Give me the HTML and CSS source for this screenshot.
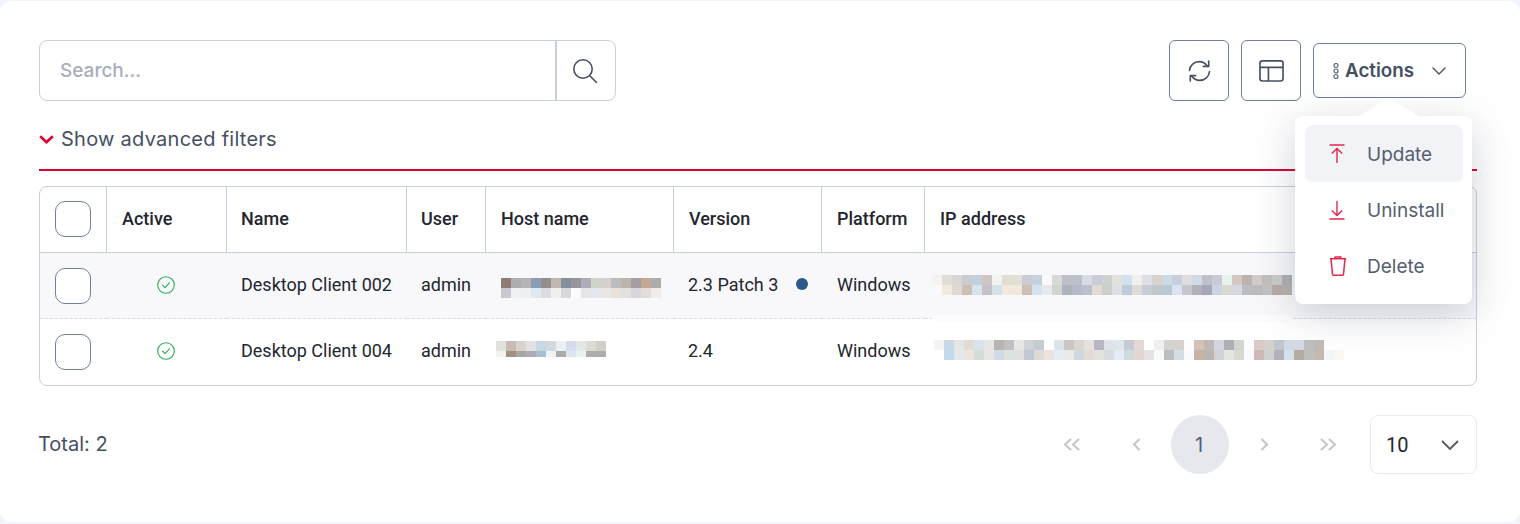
FILE: index.html
```html
<!DOCTYPE html>
<html lang="en">
<head>
<meta charset="utf-8">
<title>Clients</title>
<link rel="stylesheet" href="styles.css">
</head>
<body>
<main class="card">
  <div class="toolbar">
    <div class="search">
      <div class="search-input">Search...</div>
      <button class="search-btn" aria-label="Search">
        <svg class="ico-search" viewBox="0 0 26 26" fill="none" stroke="#454f63" stroke-width="1.6" stroke-linecap="round"><circle cx="11" cy="11" r="9.200"/><path d="M17.800 17.800l6.700 6.700"/></svg>
      </button>
    </div>
    <div class="tools">
      <button class="tool" aria-label="Refresh">
        <svg class="ico-tool" viewBox="0 0 24 24" fill="none" stroke="#454f63" stroke-width="1.6" stroke-linecap="round" stroke-linejoin="round"><path d="M2 11.500C2.400 6.400 6.600 2.600 11.800 2.600c3.400 0 6 1.500 8 4.400"/><path d="M21.200 2v5.400h-5.400"/><path d="M22 12.500c-.4 5.100-4.600 8.900-9.800 8.900-3.400 0-6-1.500-8-4.400"/><path d="M2.800 22v-5.400h5.400"/></svg>
      </button>
      <button class="tool" aria-label="Layout">
        <svg class="ico-tool" viewBox="0 0 26 24" fill="none" stroke="#454f63" stroke-width="1.7" stroke-linejoin="round"><rect x="1" y="1.400" width="24" height="21" rx="2.600"/><path d="M1 8.200h24M9.800 8.200v14.200"/></svg>
      </button>
      <div class="actions-wrap">
        <button class="actions">
          <svg class="ico-dots" viewBox="0 0 6 16" fill="none" stroke="#5a6478" stroke-width="1.200"><circle cx="3" cy="2.500" r="2"/><circle cx="3" cy="8" r="2"/><circle cx="3" cy="13.500" r="2"/></svg>
          <span class="actions-label">Actions</span>
          <svg class="ico-caret" viewBox="0 0 14 8" fill="none" stroke="#454f63" stroke-width="1.400" stroke-linecap="round" stroke-linejoin="round"><path d="M1 1l6 6 6-6"/></svg>
        </button>
        <div class="menu">
          <div class="menu-arrow"></div>
          <div class="menu-item hover">
            <svg class="ico-menu" viewBox="0 0 16 20" fill="none" stroke="#e0294f" stroke-width="1.400"><path d="M.5 1h15M8 4.500V19M2.800 9.600L8 4.500l5.200 5.100"/></svg>
            <span>Update</span>
          </div>
          <div class="menu-item">
            <svg class="ico-menu" viewBox="0 0 16 20" fill="none" stroke="#e0294f" stroke-width="1.400"><path d="M.5 19h15M8 1v14.500M2.800 10.400L8 15.500l5.200-5.100"/></svg>
            <span>Uninstall</span>
          </div>
          <div class="menu-item">
            <svg class="ico-menu ico-trash" viewBox="0 0 18 20" fill="none" stroke="#e0294f" stroke-width="1.500" stroke-linejoin="round"><path d="M.8 2.800h16.400M6 2.700V1h6v1.700M2 2.800l1.500 15.300c.1.800.5 1.200 1.300 1.200h8.400c.8 0 1.200-.4 1.300-1.200L16 2.800"/></svg>
            <span>Delete</span>
          </div>
        </div>
      </div>
    </div>
  </div>

  <div class="filters">
    <svg class="ico-chev" viewBox="0 0 15 9" fill="none" stroke="#dc0032" stroke-width="2.600"><path d="M1.200 1.200L7.500 7.200l6.300-6"/></svg>
    <span>Show advanced filters</span>
  </div>

  <div class="table-box">
    <table class="grid">
      <colgroup>
        <col class="c-check"><col class="c-active"><col class="c-name"><col class="c-user"><col class="c-host"><col class="c-version"><col class="c-platform"><col class="c-ip">
      </colgroup>
      <thead>
        <tr>
          <th class="check"><span class="box"></span></th>
          <th class="nudge">Active</th><th>Name</th><th>User</th><th class="nudge">Host name</th><th class="nudge">Version</th><th class="nudge">Platform</th><th class="nudge">IP address</th>
        </tr>
      </thead>
      <tbody>
        <tr class="striped">
          <td class="check"><span class="box"></span></td>
          <td class="status"><svg class="ico-ok" viewBox="0 0 18 18" fill="none" stroke="#27ae4f" stroke-width="1.100" stroke-linecap="round" stroke-linejoin="round"><circle cx="9" cy="9" r="8.300"/><path d="M5.600 9.200l2.400 2.400 4.500-4.700"/></svg></td>
          <td>Desktop Client 002</td>
          <td>admin</td>
          <td class="blur-cell">
            <svg class="pix pix-host1" viewBox="0 0 16 2" shape-rendering="crispEdges">
              <rect x="0" y="0" width="1" height="1" fill="#8e7b76"/><rect x="1" y="0" width="1" height="1" fill="#aeaeae"/><rect x="2" y="0" width="1" height="1" fill="#b6b4b4"/><rect x="3" y="0" width="1" height="1" fill="#8b9cb6"/><rect x="4" y="0" width="1" height="1" fill="#938e8c"/><rect x="5" y="0" width="1" height="1" fill="#c2b9ae"/><rect x="6" y="0" width="1" height="1" fill="#85909c"/><rect x="7" y="0" width="1" height="1" fill="#95969a"/><rect x="8" y="0" width="1" height="1" fill="#aeacb6"/><rect x="9" y="0" width="1" height="1" fill="#d0d3ca"/><rect x="10" y="0" width="1" height="1" fill="#d3d0ce"/><rect x="11" y="0" width="1" height="1" fill="#bdbcbe"/><rect x="12" y="0" width="1" height="1" fill="#bdb4aa"/><rect x="13" y="0" width="1" height="1" fill="#a69da2"/><rect x="14" y="0" width="1" height="1" fill="#c2a994"/><rect x="15" y="0" width="1" height="1" fill="#adacaa"/>
              <rect x="0" y="1" width="1" height="1" fill="#cbc8d0"/><rect x="1" y="1" width="1" height="1" fill="#f0f1f4"/><rect x="2" y="1" width="1" height="1" fill="#eeeff1"/><rect x="3" y="1" width="1" height="1" fill="#e0e8f2"/><rect x="4" y="1" width="1" height="1" fill="#dbdce2"/><rect x="5" y="1" width="1" height="1" fill="#f0f0f0"/><rect x="6" y="1" width="1" height="1" fill="#d6d8dc"/><rect x="7" y="1" width="1" height="1" fill="#fbfbfb"/><rect x="8" y="1" width="1" height="1" fill="#e6e5e6"/><rect x="9" y="1" width="1" height="1" fill="#e4e7ef"/><rect x="10" y="1" width="1" height="1" fill="#ebe8e4"/><rect x="11" y="1" width="1" height="1" fill="#e9e2da"/><rect x="12" y="1" width="1" height="1" fill="#e2e1df"/><rect x="13" y="1" width="1" height="1" fill="#d8d6d8"/><rect x="14" y="1" width="1" height="1" fill="#e2dcda"/><rect x="15" y="1" width="1" height="1" fill="#f0ecea"/>
            </svg>
          </td>
          <td class="version-cell">
            <div class="version"><span>2.3 Patch 3</span><span class="dot"></span></div>
          </td>
          <td class="nudge">Windows</td>
          <td class="blur-cell">
            <svg class="pix pix-ip1" viewBox="0 0 36 4.700" shape-rendering="crispEdges">
              <rect x="0" y="0" width="1" height="1" fill="#f6f2ef"/><rect x="1" y="0" width="1" height="1" fill="#e2dcd6"/><rect x="2" y="0" width="1" height="1" fill="#dad6d4"/><rect x="3" y="0" width="1" height="1" fill="#cbcbd4"/><rect x="4" y="0" width="1" height="1" fill="#c3d0de"/><rect x="5" y="0" width="1" height="1" fill="#cdc6c4"/><rect x="6" y="0" width="1" height="1" fill="#f2f4f2"/><rect x="7" y="0" width="1" height="1" fill="#e2ded4"/><rect x="8" y="0" width="1" height="1" fill="#e2dfd6"/><rect x="9" y="0" width="1" height="1" fill="#cbcbd6"/><rect x="10" y="0" width="1" height="1" fill="#c4d2e0"/><rect x="11" y="0" width="1" height="1" fill="#fafafa"/><rect x="12" y="0" width="1" height="1" fill="#d8d8d6"/><rect x="13" y="0" width="1" height="1" fill="#bfbfca"/><rect x="14" y="0" width="1" height="1" fill="#bcc2cc"/><rect x="15" y="0" width="1" height="1" fill="#d6dbe5"/><rect x="16" y="0" width="1" height="1" fill="#c9cdd8"/><rect x="17" y="0" width="1" height="1" fill="#ced2cc"/><rect x="18" y="0" width="1" height="1" fill="#e2e1dc"/><rect x="19" y="0" width="1" height="1" fill="#d0e2f2"/><rect x="20" y="0" width="1" height="1" fill="#f3efec"/><rect x="21" y="0" width="1" height="1" fill="#dedee4"/><rect x="22" y="0" width="1" height="1" fill="#d6d3ce"/><rect x="23" y="0" width="1" height="1" fill="#ccdae6"/><rect x="24" y="0" width="1" height="1" fill="#c8cfdc"/><rect x="25" y="0" width="1" height="1" fill="#e0dedc"/><rect x="26" y="0" width="1" height="1" fill="#cedae4"/><rect x="27" y="0" width="1" height="1" fill="#bcc1cc"/><rect x="28" y="0" width="1" height="1" fill="#c8cbd5"/><rect x="29" y="0" width="1" height="1" fill="#e8f2ec"/><rect x="30" y="0" width="1" height="1" fill="#d6c6c0"/><rect x="31" y="0" width="1" height="1" fill="#bdb2ae"/><rect x="32" y="0" width="1" height="1" fill="#d0cbc8"/><rect x="33" y="0" width="1" height="1" fill="#c2bfbc"/><rect x="34" y="0" width="1" height="1" fill="#cdcbcb"/><rect x="35" y="0" width="1" height="1" fill="#aeb0b4"/>
              <rect x="0" y="1" width="1" height="1" fill="#f9f9fb"/><rect x="1" y="1" width="1" height="1" fill="#f2eae0"/><rect x="2" y="1" width="1" height="1" fill="#e0d8d2"/><rect x="3" y="1" width="1" height="1" fill="#cdbfb4"/><rect x="4" y="1" width="1" height="1" fill="#d6e4f0"/><rect x="5" y="1" width="1" height="1" fill="#c4c4c8"/><rect x="6" y="1" width="1" height="1" fill="#d6e2ea"/><rect x="7" y="1" width="1" height="1" fill="#f2e9de"/><rect x="8" y="1" width="1" height="1" fill="#f2e8da"/><rect x="9" y="1" width="1" height="1" fill="#ccc0b6"/><rect x="10" y="1" width="1" height="1" fill="#d6e2f0"/><rect x="11" y="1" width="1" height="1" fill="#e6eaf0"/><rect x="12" y="1" width="1" height="1" fill="#d2d4d2"/><rect x="13" y="1" width="1" height="1" fill="#aeb4be"/><rect x="14" y="1" width="1" height="1" fill="#b6bac6"/><rect x="15" y="1" width="1" height="1" fill="#bcbfcc"/><rect x="16" y="1" width="1" height="1" fill="#e2dbd2"/><rect x="17" y="1" width="1" height="1" fill="#cccec8"/><rect x="18" y="1" width="1" height="1" fill="#dedfe2"/><rect x="19" y="1" width="1" height="1" fill="#bfcbd8"/><rect x="20" y="1" width="1" height="1" fill="#dddcd8"/><rect x="21" y="1" width="1" height="1" fill="#c8ccd4"/><rect x="22" y="1" width="1" height="1" fill="#c0c8cc"/><rect x="23" y="1" width="1" height="1" fill="#bac8d2"/><rect x="24" y="1" width="1" height="1" fill="#dce3f0"/><rect x="25" y="1" width="1" height="1" fill="#c5c6d0"/><rect x="26" y="1" width="1" height="1" fill="#b2b0b8"/><rect x="27" y="1" width="1" height="1" fill="#a6a8ba"/><rect x="28" y="1" width="1" height="1" fill="#ccd2e0"/><rect x="29" y="1" width="1" height="1" fill="#dad9d0"/><rect x="30" y="1" width="1" height="1" fill="#d8d8e2"/><rect x="31" y="1" width="1" height="1" fill="#bcbdc2"/><rect x="32" y="1" width="1" height="1" fill="#bcbcbc"/><rect x="33" y="1" width="1" height="1" fill="#c2c1c6"/><rect x="34" y="1" width="1" height="1" fill="#b8aca6"/><rect x="35" y="1" width="1" height="1" fill="#bcb2ac"/>
              <rect x="0" y="2" width="36" height="2" fill="#f8f8fa"/>
              <rect x="0" y="4" width="36" height="0.700" fill="#fcfcfd"/>
            </svg>
          </td>
        </tr>
        <tr>
          <td class="check"><span class="box"></span></td>
          <td class="status"><svg class="ico-ok" viewBox="0 0 18 18" fill="none" stroke="#27ae4f" stroke-width="1.100" stroke-linecap="round" stroke-linejoin="round"><circle cx="9" cy="9" r="8.300"/><path d="M5.600 9.200l2.400 2.400 4.500-4.700"/></svg></td>
          <td>Desktop Client 004</td>
          <td>admin</td>
          <td class="blur-cell">
            <svg class="pix pix-host2" viewBox="0 0 11 1.600" shape-rendering="crispEdges">
              <rect x="0" y="0" width="1" height="1" fill="#e2e2dc"/><rect x="1" y="0" width="1" height="1" fill="#c6bcb4"/><rect x="2" y="0" width="1" height="1" fill="#dbd2cc"/><rect x="3" y="0" width="1" height="1" fill="#e1e1e6"/><rect x="4" y="0" width="1" height="1" fill="#c6d8e4"/><rect x="5" y="0" width="1" height="1" fill="#d2d9e0"/><rect x="6" y="0" width="1" height="1" fill="#eaf0f4"/><rect x="7" y="0" width="1" height="1" fill="#d6dcec"/><rect x="8" y="0" width="1" height="1" fill="#e2e8e4"/><rect x="9" y="0" width="1" height="1" fill="#dcdcd4"/><rect x="10" y="0" width="1" height="1" fill="#d2cecc"/>
              <rect x="0" y="1" width="1" height="1" fill="#f4f2ea"/><rect x="1" y="1" width="1" height="1" fill="#a18f84"/><rect x="2" y="1" width="1" height="1" fill="#a8a6a4"/><rect x="3" y="1" width="1" height="1" fill="#aeacb2"/><rect x="4" y="1" width="1" height="1" fill="#a5c0d0"/><rect x="5" y="1" width="1" height="1" fill="#f2f2f2"/><rect x="6" y="1" width="1" height="1" fill="#acacac"/><rect x="7" y="1" width="1" height="1" fill="#e0e6ee"/><rect x="8" y="1" width="1" height="1" fill="#eaf2ee"/><rect x="9" y="1" width="1" height="1" fill="#adadab"/><rect x="10" y="1" width="1" height="1" fill="#adadab"/>
            </svg>
          </td>
          <td>2.4</td>
          <td class="nudge">Windows</td>
          <td class="blur-cell">
            <svg class="pix pix-ip2" viewBox="0 0 41 2" shape-rendering="crispEdges">
              <rect x="0" y="0" width="1" height="1" fill="#f5f3f1"/><rect x="1" y="0" width="1" height="1" fill="#c8d9e8"/><rect x="2" y="0" width="1" height="1" fill="#e4e6e6"/><rect x="3" y="0" width="1" height="1" fill="#e4dad4"/><rect x="4" y="0" width="1" height="1" fill="#d6e4e8"/><rect x="5" y="0" width="1" height="1" fill="#e6e6e4"/><rect x="6" y="0" width="1" height="1" fill="#b8b4b0"/><rect x="7" y="0" width="1" height="1" fill="#c0c0c4"/><rect x="8" y="0" width="1" height="1" fill="#e6e6e2"/><rect x="9" y="0" width="1" height="1" fill="#ccd4d8"/><rect x="10" y="0" width="1" height="1" fill="#c6ccd4"/><rect x="11" y="0" width="1" height="1" fill="#fff"/><rect x="12" y="0" width="1" height="1" fill="#dce6e8"/><rect x="13" y="0" width="1" height="1" fill="#ccc6c4"/><rect x="14" y="0" width="1" height="1" fill="#dad6d0"/><rect x="15" y="0" width="1" height="1" fill="#e6e2de"/><rect x="16" y="0" width="1" height="1" fill="#b8b6c2"/><rect x="17" y="0" width="1" height="1" fill="#e0e4ea"/><rect x="18" y="0" width="1" height="1" fill="#dee6ee"/><rect x="19" y="0" width="1" height="1" fill="#c6cad2"/><rect x="20" y="0" width="1" height="1" fill="#e2d8d4"/><rect x="21" y="0" width="1" height="1" fill="#fff"/><rect x="22" y="0" width="1" height="1" fill="#eef0f0"/><rect x="23" y="0" width="1" height="1" fill="#d4d4ce"/><rect x="24" y="0" width="1" height="1" fill="#d8d2cc"/><rect x="25" y="0" width="1" height="1" fill="#fdfcfa"/><rect x="26" y="0" width="1" height="1" fill="#d2c2bc"/><rect x="27" y="0" width="1" height="1" fill="#bfb8b4"/><rect x="28" y="0" width="1" height="1" fill="#d2d6de"/><rect x="29" y="0" width="1" height="1" fill="#aeaeb6"/><rect x="30" y="0" width="1" height="1" fill="#d2d6d0"/><rect x="31" y="0" width="1" height="1" fill="#fdfcfa"/><rect x="32" y="0" width="1" height="1" fill="#d8cac4"/><rect x="33" y="0" width="1" height="1" fill="#d6d0ca"/><rect x="34" y="0" width="1" height="1" fill="#c0c6cc"/><rect x="35" y="0" width="1" height="1" fill="#d2dae4"/><rect x="36" y="0" width="1" height="1" fill="#d6dae4"/><rect x="37" y="0" width="1" height="1" fill="#c0c0c2"/><rect x="38" y="0" width="1" height="1" fill="#c2bcb8"/><rect x="39" y="0" width="1" height="1" fill="#fff"/><rect x="40" y="0" width="1" height="1" fill="#fff"/>
              <rect x="0" y="1" width="1" height="1" fill="#fff"/><rect x="1" y="1" width="1" height="1" fill="#c4d8ee"/><rect x="2" y="1" width="1" height="1" fill="#e2e8ea"/><rect x="3" y="1" width="1" height="1" fill="#eae4de"/><rect x="4" y="1" width="1" height="1" fill="#d8dcd8"/><rect x="5" y="1" width="1" height="1" fill="#e6e6e4"/><rect x="6" y="1" width="1" height="1" fill="#d2dae8"/><rect x="7" y="1" width="1" height="1" fill="#dce2e0"/><rect x="8" y="1" width="1" height="1" fill="#e0e0de"/><rect x="9" y="1" width="1" height="1" fill="#c2c8d2"/><rect x="10" y="1" width="1" height="1" fill="#e0dad6"/><rect x="11" y="1" width="1" height="1" fill="#ece2e0"/><rect x="12" y="1" width="1" height="1" fill="#e4ecf6"/><rect x="13" y="1" width="1" height="1" fill="#eceae6"/><rect x="14" y="1" width="1" height="1" fill="#d2d6de"/><rect x="15" y="1" width="1" height="1" fill="#e2dcd6"/><rect x="16" y="1" width="1" height="1" fill="#e4e2dc"/><rect x="17" y="1" width="1" height="1" fill="#d8dce0"/><rect x="18" y="1" width="1" height="1" fill="#e4ecf6"/><rect x="19" y="1" width="1" height="1" fill="#d0dada"/><rect x="20" y="1" width="1" height="1" fill="#e2d6d2"/><rect x="21" y="1" width="1" height="1" fill="#e4e2e6"/><rect x="22" y="1" width="1" height="1" fill="#f8faf8"/><rect x="23" y="1" width="1" height="1" fill="#bcbec0"/><rect x="24" y="1" width="1" height="1" fill="#d4dce4"/><rect x="25" y="1" width="1" height="1" fill="#f8fafc"/><rect x="26" y="1" width="1" height="1" fill="#c8b2a6"/><rect x="27" y="1" width="1" height="1" fill="#bab4b2"/><rect x="28" y="1" width="1" height="1" fill="#d0d2d6"/><rect x="29" y="1" width="1" height="1" fill="#e4e6e0"/><rect x="30" y="1" width="1" height="1" fill="#d8dad2"/><rect x="31" y="1" width="1" height="1" fill="#f8fafc"/><rect x="32" y="1" width="1" height="1" fill="#ceb9b6"/><rect x="33" y="1" width="1" height="1" fill="#ced0d2"/><rect x="34" y="1" width="1" height="1" fill="#b6b0bc"/><rect x="35" y="1" width="1" height="1" fill="#d4e2ee"/><rect x="36" y="1" width="1" height="1" fill="#b4aca0"/><rect x="37" y="1" width="1" height="1" fill="#bebebc"/><rect x="38" y="1" width="1" height="1" fill="#c4bab2"/><rect x="39" y="1" width="1" height="1" fill="#f4f6f4"/><rect x="40" y="1" width="1" height="1" fill="#faf8f2"/>
            </svg>
          </td>
        </tr>
      </tbody>
    </table>
  </div>

  <div class="footer">
    <span class="total">Total: 2</span>
    <div class="pager">
      <nav class="pages">
        <span class="page"><svg class="ico-page wide" viewBox="0 0 18 13" fill="none" stroke="#c3c5c9" stroke-width="2"><path d="M8 1L2 6.500l6 5.500M16 1l-6 5.500 6 5.500"/></svg></span>
        <span class="page"><svg class="ico-page" viewBox="0 0 9 13" fill="none" stroke="#c3c5c9" stroke-width="2"><path d="M7.500 1L2 6.500l5.500 5.500"/></svg></span>
        <span class="page current">1</span>
        <span class="page"><svg class="ico-page" viewBox="0 0 9 13" fill="none" stroke="#c3c5c9" stroke-width="2"><path d="M1.500 1L7 6.500 1.500 12"/></svg></span>
        <span class="page"><svg class="ico-page wide" viewBox="0 0 18 13" fill="none" stroke="#c3c5c9" stroke-width="2"><path d="M2 1l6 5.500L2 12M10 1l6 5.500-6 5.500"/></svg></span>
      </nav>
      <div class="size">
        <span>10</span>
        <svg class="ico-size" viewBox="0 0 18 10" fill="none" stroke="#55585e" stroke-width="1.800"><path d="M1 1l8 8 8-8"/></svg>
      </div>
    </div>
  </div>
</main>
</body>
</html>
```
FILE: styles.css
```css
* { box-sizing: border-box; }

html, body { margin: 0; height: 100%; }

body {
  background: #f1f5fb;
  padding: 1px 0 2px;
  font-family: "Inter", "Liberation Sans", sans-serif;
  color: #454f63;
  overflow: hidden;
}

button { font: inherit; color: inherit; background: none; padding: 0; cursor: pointer; }

.card {
  height: 521px;
  background: #fff;
  border-radius: 12px;
  padding: 39px 43px 0 39px;
}

/* toolbar */
.toolbar {
  display: flex;
  justify-content: space-between;
  align-items: flex-start;
  padding-right: 11px;
}

.search {
  width: 577px;
  height: 61px;
  display: flex;
  border: 1px solid #c8cfdf;
  border-radius: 8px;
}

.search-input {
  flex: 1;
  padding-left: 20px;
  display: flex;
  align-items: center;
  font-size: 19px;
  font-weight: 500;
  color: #a6aebf;
}

.search-btn {
  width: 60px;
  border: 0;
  border-left: 2px solid #c8cfdf;
  display: flex;
  align-items: center;
  justify-content: center;
  padding-right: 2px;
}

.ico-search { width: 26px; height: 26px; }

.tools { display: flex; gap: 12px; align-items: flex-start; }

.tool {
  width: 60px;
  height: 61px;
  border: 1px solid #6e7f9f;
  border-radius: 6px;
  display: flex;
  align-items: center;
  justify-content: center;
}

.ico-tool { width: 25px; height: 24px; }

.actions-wrap { position: relative; margin-top: 3px; }

.actions {
  width: 153px;
  height: 55px;
  border: 1px solid #6e7f9f;
  border-radius: 6px;
  display: flex;
  align-items: center;
  padding-left: 19px;
}

.ico-dots { width: 6px; height: 16px; }

.actions-label {
  margin-left: 6px;
  font-size: 18.800px;
  font-weight: 600;
}

.ico-caret { width: 14px; height: 8px; margin-left: auto; margin-right: 19px; }

/* dropdown */
.menu {
  position: absolute;
  z-index: 5;
  top: 73px;
  left: -18px;
  width: 177px;
  height: 188px;
  padding: 9px 9px 0 10px;
  background: #fff;
  border-radius: 8px;
  box-shadow: 0 10px 40px rgba(60, 66, 87, 0.24);
}

.menu-arrow {
  position: absolute;
  top: -18px;
  left: 64px;
  width: 60px;
  height: 18px;
  background: #fff;
  clip-path: polygon(50% 0, 100% 100%, 0 100%);
}

.menu-item {
  height: 57px;
  margin-bottom: -1px;
  display: flex;
  align-items: center;
  padding-left: 24px;
  padding-top: 1px;
  border-radius: 8px;
  font-size: 19px;
  color: #555e70;
}

.menu-item.hover { background: #f2f3f7; }

.ico-menu { width: 16px; height: 20px; margin-right: 22px; flex: none; }

.ico-trash { width: 18px; margin-right: 20px; }

/* filters */
.filters {
  height: 70px;
  padding-top: 25px;
  border-bottom: 2px solid #dc0032;
  display: flex;
  align-items: flex-start;
  font-size: 20px;
  letter-spacing: 0.26px;
  line-height: 26px;
  color: #454f63;
}

.ico-chev { width: 15px; height: 9px; margin: 9px 7px 0 0; flex: none; }

/* table */
.table-box {
  margin-top: 15px;
  height: 200px;
  border: 1px solid #c8cfdf;
  border-radius: 8px;
  overflow: hidden;
}

.grid {
  width: 100%;
  border-collapse: separate;
  border-spacing: 0;
  table-layout: fixed;
  font-family: "Roboto", "Liberation Sans", sans-serif;
  font-size: 18px;
  color: #23262f;
}

.c-check { width: 67px; }
.c-active { width: 120px; }
.c-name { width: 180px; }
.c-user { width: 79px; }
.c-host { width: 188px; }
.c-version { width: 148px; }
.c-platform { width: 103px; }

th, td {
  text-align: left;
  white-space: nowrap;
}

th {
  height: 66px;
  padding: 0 14px 3px;
  font-weight: 500;
  border-right: 1px solid #c8cfdf;
  border-bottom: 1px solid #c8cfdf;
}

th:last-child { border-right: 0; }

td {
  height: 66px;
  padding: 0 14px 3px;
}

tbody tr.striped td {
  background: #f8f8fb;
  border-bottom: 1px dashed #d9dce2;
}

th.nudge, td.nudge { padding-left: 15px; }

th.check { padding: 0 0 1px 15px; }

td.check { padding: 0 0 0 15px; }

.box {
  display: block;
  width: 36px;
  height: 36px;
  border: 1px solid #6e7f9f;
  border-radius: 10px;
  background: #fff;
}

td.status { text-align: center; padding: 0 16px 2px 14px; }

.ico-ok { width: 18px; height: 18px; display: block; margin: 0 auto; }

td.version-cell { padding-left: 14px; padding-right: 14px; }

.version { display: flex; align-items: center; justify-content: space-between; }

.dot { width: 12px; height: 12px; border-radius: 50%; background: #2b5a8a; }

td.blur-cell { padding: 0; }

.pix { display: block; }

.pix-host1 { width: 160px; height: 20px; margin: 5px 0 0 15px; }
.pix-host2 { width: 110px; height: 16px; margin: -6px 0 0 10px; }
.pix-ip1 { width: 360px; height: 47px; margin: 22px 0 -4px 7px; }
.pix-ip2 { width: 410px; height: 20px; margin: -5px 0 0 9px; }

/* footer */
.footer {
  margin-top: 29px;
  height: 59px;
  display: flex;
  align-items: center;
  justify-content: space-between;
}

.total { font-size: 20px; color: #454f63; margin: -2px 0 0 -1px; }

.pager { display: flex; align-items: center; gap: 13px; }

.pages { display: flex; gap: 6px; }

.page {
  width: 58px;
  height: 59px;
  border-radius: 50%;
  display: flex;
  align-items: center;
  justify-content: center;
  font-size: 20px;
  color: #555e70;
}

.page.current { background: #e7e8ee; padding-right: 2px; }

.ico-page { width: 9px; height: 13px; }
.ico-page.wide { width: 18px; }

.size {
  width: 107px;
  height: 59px;
  border: 1px solid #e9ebf0;
  border-radius: 8px;
  display: flex;
  align-items: center;
  justify-content: space-between;
  padding: 0 17px 0 15px;
  font-family: "Roboto", sans-serif;
  font-size: 20px;
  color: #23262f;
}

.ico-size { width: 18px; height: 10px; }
```
